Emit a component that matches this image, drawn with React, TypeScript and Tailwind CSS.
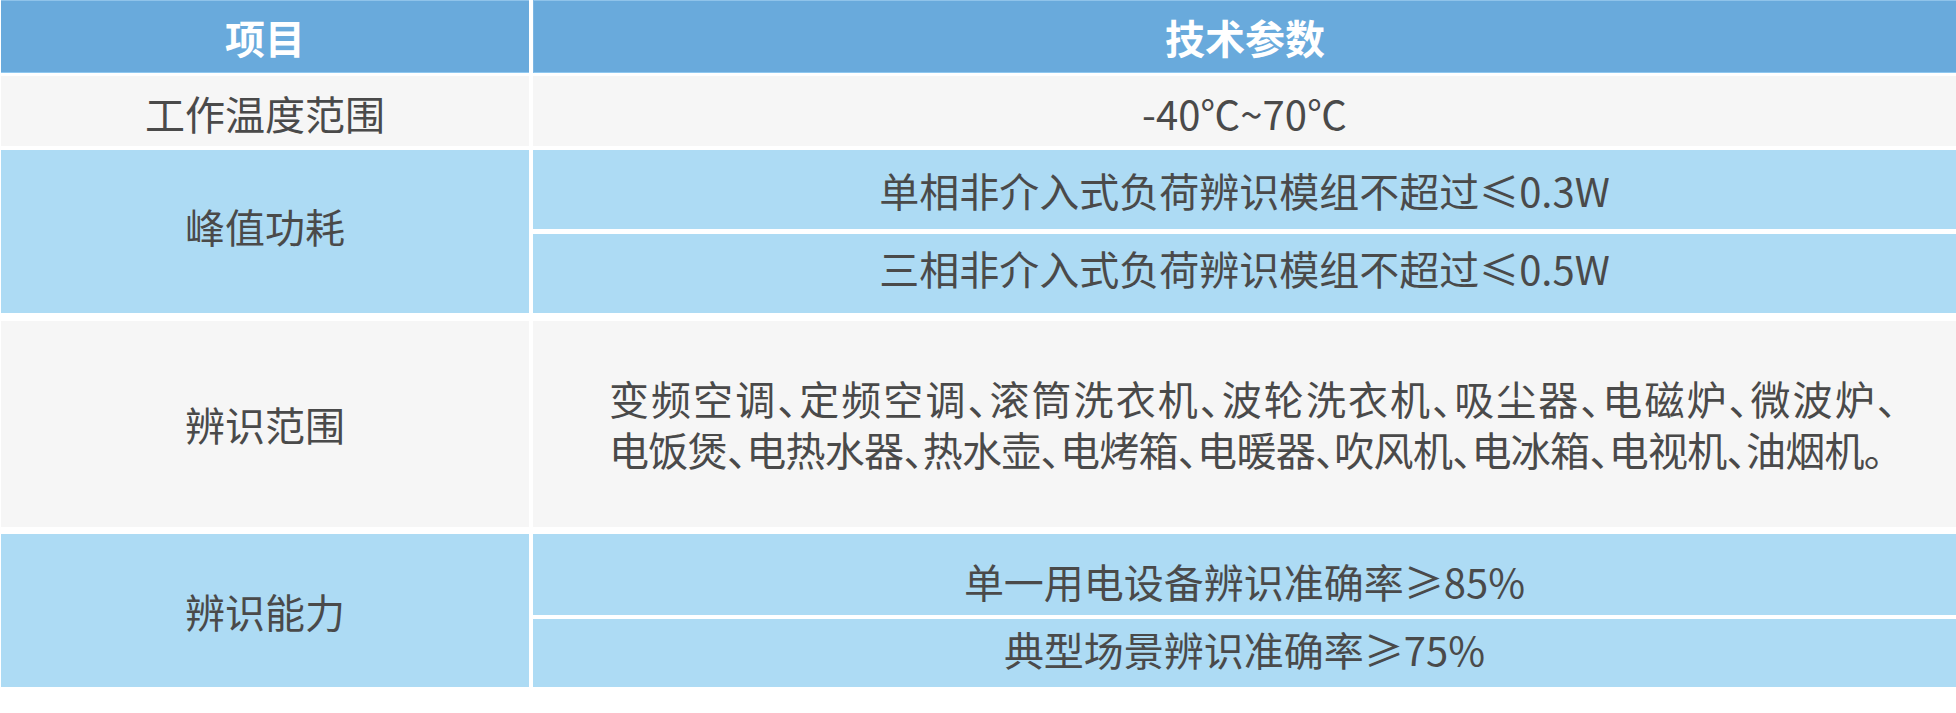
const font = { fontFamily: '"Noto Sans CJK SC", "Noto Sans", sans-serif' };

function Cell({ children, className = '' }: { children: React.ReactNode; className?: string }) {
  return (
    <div className={`flex items-center justify-center text-[40px] leading-none text-[#4a4a4a] ${className}`}>
      {children}
    </div>
  );
}

function App() {
  return (
    <div className="min-h-screen w-[1956px] bg-white pl-px" style={font}>
      {/* header */}
      <div className="grid grid-cols-[528px_1423px] gap-x-[4px]">
        <div className="flex h-[73px] items-center justify-center border-y border-t-[#8fc3ea] border-b-[#8fc8f0] bg-[#69aadc] text-[40px] font-bold text-white">
          项目
        </div>
        <div className="flex h-[73px] items-center justify-center border-y border-l border-t-[#8fc3ea] border-b-[#8fc8f0] border-l-[#7db6e2] bg-[#69aadc] text-[40px] font-bold text-white">
          技术参数
        </div>
      </div>

      {/* 工作温度范围 */}
      <div className="mt-[3px] grid h-[70px] grid-cols-[528px_1423px] gap-x-[4px]">
        <Cell className="bg-[#f6f6f6] pt-[4px]">工作温度范围</Cell>
        <Cell className="bg-[#f6f6f6] pt-[4px]">-40℃~70℃</Cell>
      </div>

      {/* 峰值功耗 */}
      <div className="mt-[4px] grid h-[163px] grid-cols-[528px_1423px] gap-x-[4px]">
        <Cell className="bg-[#addbf4] pb-[12px]">峰值功耗</Cell>
        <div className="flex flex-col gap-[5px]">
          <Cell className="h-[79px] bg-[#addbf4]">单相非介入式负荷辨识模组不超过≤0.3W</Cell>
          <Cell className="h-[79px] bg-[#addbf4] pb-[12px]">三相非介入式负荷辨识模组不超过≤0.5W</Cell>
        </div>
      </div>

      {/* 辨识范围 */}
      <div className="mt-[8px] grid h-[206px] grid-cols-[528px_1423px] gap-x-[4px]">
        <Cell className="bg-[#f6f6f6]">辨识范围</Cell>
        <Cell className="bg-[#f6f6f6] pl-[16px]">
          <div className="w-[1287px] leading-[51px] tracking-[-0.7px] [font-feature-settings:'halt']">
            <div className="text-justify [text-align-last:justify]">
              变频空调、定频空调、滚筒洗衣机、波轮洗衣机、吸尘器、电磁炉、微波炉、
            </div>
            <div>电饭煲、电热水器、热水壶、电烤箱、电暖器、吹风机、电冰箱、电视机、油烟机。</div>
          </div>
        </Cell>
      </div>

      {/* 辨识能力 */}
      <div className="mt-[7px] grid h-[153px] grid-cols-[528px_1423px] gap-x-[4px]">
        <Cell className="bg-[#addbf4]">辨识能力</Cell>
        <div className="flex flex-col gap-[4px]">
          <Cell className="h-[81px] bg-[#addbf4] pt-[13px]">单一用电设备辨识准确率≥85%</Cell>
          <Cell className="h-[68px] bg-[#addbf4] pb-[8px]">典型场景辨识准确率≥75%</Cell>
        </div>
      </div>
    </div>
  );
}

export default App;
